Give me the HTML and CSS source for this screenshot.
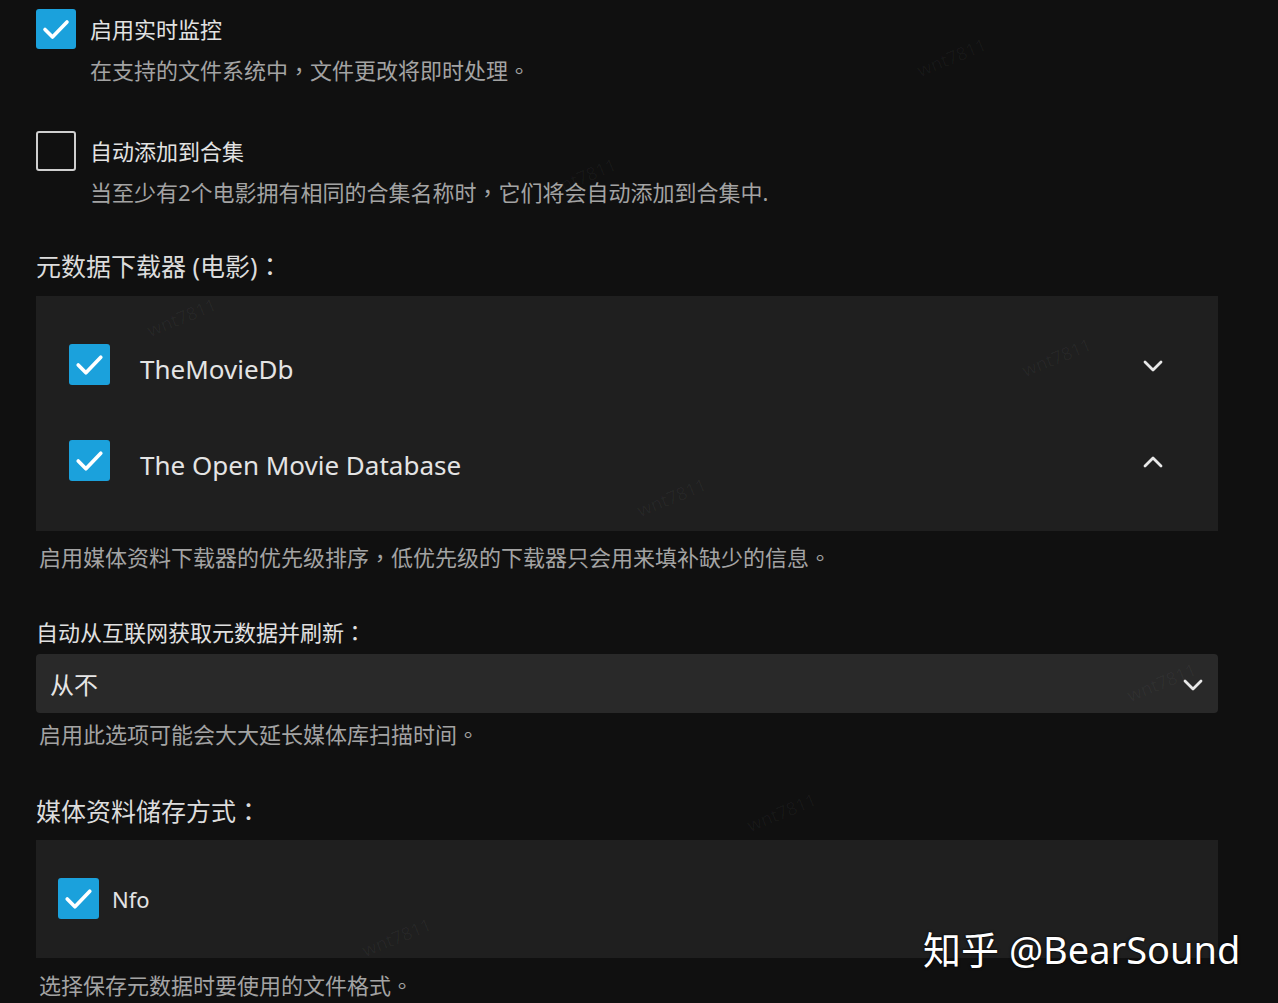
FILE: index.html
```html
<!DOCTYPE html>
<html lang="zh-CN">
<head>
<meta charset="utf-8">
<title>媒体库设置</title>
<link rel="stylesheet" href="styles.css">
</head>
<body>
<div class="page">
  <div class="check-item first">
    <span class="cb checked"><svg viewBox="0 0 40 40"><path d="M9 20.5 L16.5 28 L31 13"/></svg></span>
    <div class="check-text">
      <div class="check-label">启用实时监控</div>
      <div class="check-desc">在支持的文件系统中<span class="pn" lang="zh-TW">，</span>文件更改将即时处理<span class="pn" lang="zh-TW">。</span></div>
    </div>
  </div>

  <div class="check-item second">
    <span class="cb"></span>
    <div class="check-text">
      <div class="check-label">自动添加到合集</div>
      <div class="check-desc">当至少有2个电影拥有相同的合集名称时<span class="pn" lang="zh-TW">，</span>它们将会自动添加到合集中.</div>
    </div>
  </div>

  <h2 class="heading h-fetchers">元数据下载器 (电影)<span class="pn" lang="zh-TW">：</span></h2>
  <div class="panel panel-fetchers">
    <div class="fetch-row">
      <span class="cb checked big"><svg viewBox="0 0 40 40"><path d="M9 20.5 L16.5 28 L31 13"/></svg></span>
      <span class="fetch-name">TheMovieDb</span>
      <svg class="chev" viewBox="0 0 20 12"><path d="M2 2 L10 10 L18 2"/></svg>
    </div>
    <div class="fetch-row">
      <span class="cb checked big"><svg viewBox="0 0 40 40"><path d="M9 20.5 L16.5 28 L31 13"/></svg></span>
      <span class="fetch-name">The Open Movie Database</span>
      <svg class="chev" viewBox="0 0 20 12"><path d="M2 10 L10 2 L18 10"/></svg>
    </div>
  </div>
  <div class="desc d-fetchers">启用媒体资料下载器的优先级排序<span class="pn" lang="zh-TW">，</span>低优先级的下载器只会用来填补缺少的信息<span class="pn" lang="zh-TW">。</span></div>

  <div class="field-label">自动从互联网获取元数据并刷新<span class="pn" lang="zh-TW">：</span></div>
  <div class="select">
    <span class="select-value">从不</span>
    <svg class="chev" viewBox="0 0 20 12"><path d="M2 2 L10 10 L18 2"/></svg>
  </div>
  <div class="desc d-select">启用此选项可能会大大延长媒体库扫描时间<span class="pn" lang="zh-TW">。</span></div>

  <h2 class="heading h-savers">媒体资料储存方式<span class="pn" lang="zh-TW">：</span></h2>
  <div class="panel panel-savers">
    <div class="saver-row">
      <span class="cb checked big"><svg viewBox="0 0 40 40"><path d="M9 20.5 L16.5 28 L31 13"/></svg></span>
      <span class="saver-name">Nfo</span>
    </div>
  </div>
  <div class="desc d-savers">选择保存元数据时要使用的文件格式<span class="pn" lang="zh-TW">。</span></div>
</div>

<div class="wm w1">wnt7811</div>
<div class="wm w2">wnt7811</div>
<div class="wm w3">wnt7811</div>
<div class="wm w4">wnt7811</div>
<div class="wm w5">wnt7811</div>
<div class="wm w6">wnt7811</div>
<div class="wm w7">wnt7811</div>
<div class="wm w8">wnt7811</div>

<div class="brand">知乎 @BearSound</div>
</body>
</html>
```

FILE: styles.css
```css
html, body {
  margin: 0;
  padding: 0;
  background: #101010;
  height: 1003px;
  overflow: hidden;
}
body {
  position: relative;
  font-family: "Noto Sans", "Noto Sans CJK SC", sans-serif;
  color: #dedede;
}
.pn {
  font-family: "Noto Sans CJK TC", sans-serif;
  line-height: 0;
}
.page {
  width: 1182px;
  padding-left: 36px;
  display: flex;
  flex-direction: column;
}
.check-item {
  display: flex;
  align-items: flex-start;
  gap: 14px;
}
.check-item.first { margin-top: 9px; }
.check-item.second { margin-top: 46px; }
.cb {
  flex: none;
  width: 40px;
  height: 40px;
  box-sizing: border-box;
  border: 2px solid #cfcfcf;
  border-radius: 3px;
  display: flex;
}
.cb.checked {
  background: #1ba1dc;
  border: none;
}
.cb.big { width: 41px; height: 41px; }
.cb svg { width: 100%; height: 100%; }
.cb svg path {
  fill: none;
  stroke: #fff;
  stroke-width: 3.6;
  stroke-linecap: round;
  stroke-linejoin: round;
}
.check-text { display: flex; flex-direction: column; }
.check-label {
  font-size: 22px;
  line-height: 40px;
  color: #e2e2e2;
}
.check-desc {
  font-size: 22px;
  line-height: 30px;
  margin-top: 6px;
  color: #a3a3a3;
}
.heading {
  margin: 0;
  font-size: 25px;
  font-weight: normal;
  line-height: 36px;
  color: #dcdcdc;
}
.h-fetchers { margin-top: 41px; }
.h-savers { margin-top: 44px; }
.panel {
  background: #1f1f1f;
  display: flex;
  flex-direction: column;
}
.panel-fetchers {
  margin-top: 12px;
  padding: 48px 55px 50px 33px;
  gap: 55px;
}
.fetch-row {
  display: flex;
  align-items: center;
  height: 41px;
}
.fetch-name {
  margin-left: 30px;
  padding-top: 8px;
  font-size: 26px;
  color: #e4e4e4;
  flex: 1;
}
.chev {
  width: 20px;
  height: 12px;
  flex: none;
}
.chev path {
  fill: none;
  stroke: #e8e8e8;
  stroke-width: 2.8;
  stroke-linecap: round;
  stroke-linejoin: round;
}
.fetch-row .chev { margin-top: 2px; }
.desc {
  font-size: 22px;
  line-height: 30px;
  color: #a3a3a3;
  padding-left: 3px;
}
.d-fetchers { margin-top: 11px; }
.field-label {
  margin-top: 45px;
  font-size: 22px;
  line-height: 30px;
  color: #e0e0e0;
}
.select {
  margin-top: 7px;
  height: 59px;
  box-sizing: border-box;
  background: #292929;
  border-radius: 4px;
  display: flex;
  align-items: center;
  padding: 0 15px 0 14px;
}
.select-value {
  flex: 1;
  font-size: 24px;
  color: #e6e6e6;
}
.select .chev { margin-top: 2px; }
.d-select { margin-top: 6px; }
.panel-savers {
  margin-top: 11px;
  padding: 38px 22px 39px 22px;
}
.saver-row {
  display: flex;
  align-items: center;
  height: 41px;
}
.saver-name {
  margin-left: 13px;
  font-size: 22px;
  color: #e4e4e4;
}
.d-savers { margin-top: 12px; }

.wm {
  position: absolute;
  font-family: "Noto Sans", sans-serif;
  font-size: 18px;
  color: rgba(255, 255, 255, 0.035);
  transform: rotate(-22deg);
  pointer-events: none;
}
.w1 { left: 915px; top: 45px; }
.w2 { left: 545px; top: 165px; }
.w3 { left: 145px; top: 305px; }
.w4 { left: 1020px; top: 345px; }
.w5 { left: 635px; top: 485px; }
.w6 { left: 1125px; top: 670px; }
.w7 { left: 745px; top: 800px; }
.w8 { left: 360px; top: 925px; }

.brand {
  position: absolute;
  left: 923px;
  top: 926px;
  font-family: "Noto Sans", "Noto Sans CJK SC", sans-serif;
  font-size: 38px;
  line-height: 46px;
  color: #ffffff;
  white-space: nowrap;
  text-shadow: 0 0 3px rgba(0,0,0,0.8), 0 0 1px rgba(0,0,0,0.9);
}
```
